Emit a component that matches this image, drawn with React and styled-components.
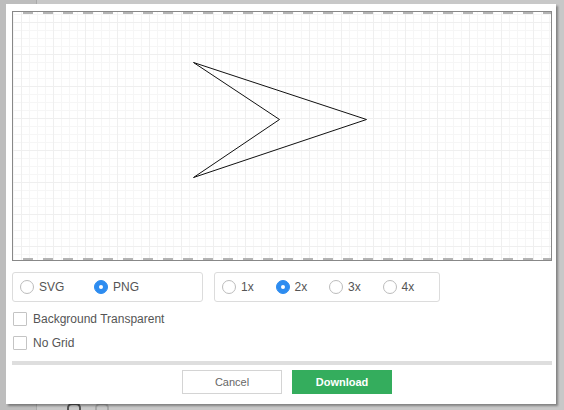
import React, { useState } from "react";
import styled, { createGlobalStyle } from "styled-components";

const GlobalStyle = createGlobalStyle`
  html, body {
    margin: 0;
    padding: 0;
    background: #c8c8c8;
    font-family: "Liberation Sans", Arial, Helvetica, sans-serif;
  }
`;

const Workspace = styled.div`
  position: relative;
  width: 564px;
  height: 410px;
  overflow: hidden;
  display: flex;
  background: #c8c8c8;
`;

const SideBar = styled.div`
  width: 36px;
  flex: none;
  background: #bdbdbd;
  border-right: 1px solid #a9a9a9;
`;

const ToolStrip = styled.div`
  flex: 1;
  display: flex;
  align-items: flex-end;
  padding-left: 30px;
  gap: 14px;
`;

const ToolGlyph = styled.span`
  width: 10px;
  height: 5px;
  border-radius: 5px 5px 0 0;
  border: 2px solid ${(p) => (p.$dim ? "#a8a8a8" : "#555")};
  border-bottom: none;
`;

/* modal window over the editor */
const Dialog = styled.div`
  position: absolute;
  left: 6px;
  top: 4px;
  width: 550px;
  height: 400px;
  box-sizing: border-box;
  background: #fff;
  padding: 7px 4px 0 6px;
  box-shadow: 2px 2px 2px rgba(0, 0, 0, 0.35);
  display: flex;
  flex-direction: column;
`;

const Preview = styled.div`
  position: relative;
  width: 540px;
  height: 250px;
  box-sizing: border-box;
  border: 1px solid #888;
  background-color: #fff;
  background-image:
    linear-gradient(to right, #efefef 1px, transparent 1px),
    linear-gradient(to bottom, #efefef 1px, transparent 1px),
    linear-gradient(to right, #f6f6f6 1px, transparent 1px),
    linear-gradient(to bottom, #f6f6f6 1px, transparent 1px);
  background-size: 32px 32px, 32px 32px, 8px 8px, 8px 8px;
  background-position: 8px 10px, 8px 10px, 8px 10px, 8px 10px;
`;

/* page break markers along the top and bottom edge */
const PageEdge = styled.div`
  position: absolute;
  left: 0;
  right: 0;
  height: 2px;
  ${(p) => (p.$bottom ? "bottom: 0;" : "top: 0;")}
  background: repeating-linear-gradient(
    to right,
    transparent 0 10px,
    #b4b4b4 10px 20px
  );
`;

const Drawing = styled.svg`
  position: absolute;
  left: 0;
  top: 0;
`;

const OptionRow = styled.div`
  display: flex;
  gap: 11px;
  margin-top: 11px;
`;

const OptionGroup = styled.div`
  height: 30px;
  width: ${(p) => p.$width}px;
  box-sizing: border-box;
  border: 1px solid #dcdcdc;
  border-radius: 3px;
  display: flex;
  align-items: center;
  padding-left: 7px;
`;

const RadioLabel = styled.label`
  width: ${(p) => p.$width}px;
  flex: none;
  display: flex;
  align-items: center;
  gap: 5px;
  font-size: 12px;
  color: #555;
  cursor: pointer;
`;

const RadioDot = styled.span`
  width: 14px;
  height: 14px;
  box-sizing: border-box;
  border-radius: 50%;
  flex: none;
  border: 1px solid ${(p) => (p.$on ? "#2d8cf0" : "#bcbcbc")};
  background: ${(p) => (p.$on ? "#2d8cf0" : "#fff")};
  display: flex;
  align-items: center;
  justify-content: center;

  &::after {
    content: "";
    width: 4px;
    height: 4px;
    border-radius: 50%;
    background: #fff;
    display: ${(p) => (p.$on ? "block" : "none")};
  }
`;

const CheckList = styled.div`
  display: flex;
  flex-direction: column;
  gap: 10px;
  margin-top: 10px;
  padding-left: 1px;
`;

const CheckLabel = styled.label`
  display: flex;
  align-items: center;
  gap: 6px;
  font-size: 12px;
  color: #555;
  height: 14px;
  cursor: pointer;
`;

const CheckBox = styled.span`
  width: 14px;
  height: 14px;
  box-sizing: border-box;
  border: 1px solid #c4c4c4;
  border-radius: 1px;
  background: #fff;
`;

const Divider = styled.div`
  width: 540px;
  height: 4px;
  background: #dedede;
  margin-top: 11px;
`;

const Footer = styled.div`
  width: 540px;
  display: flex;
  justify-content: center;
  gap: 10px;
  margin-top: 5px;
  padding-left: 10px;
  box-sizing: border-box;
`;

const Button = styled.button`
  width: 100px;
  height: 24px;
  box-sizing: border-box;
  font-family: inherit;
  font-size: 11px;
  cursor: pointer;
  border: 1px solid ${(p) => (p.$primary ? "#34ad5d" : "#d4d4d4")};
  background: ${(p) => (p.$primary ? "#34ad5d" : "#fff")};
  color: ${(p) => (p.$primary ? "#fff" : "#666")};
  font-weight: ${(p) => (p.$primary ? "bold" : "normal")};
`;

function Radio({ label, checked, width, onSelect }) {
  return (
    <RadioLabel $width={width} onClick={onSelect}>
      <RadioDot $on={checked} />
      {label}
    </RadioLabel>
  );
}

export default function App() {
  const [format, setFormat] = useState("PNG");
  const [scale, setScale] = useState("2x");

  return (
    <>
      <GlobalStyle />
      <Workspace>
        <SideBar />
        <ToolStrip>
          <ToolGlyph />
          <ToolGlyph $dim />
        </ToolStrip>

        <Dialog>
          <Preview>
            <PageEdge />
            <PageEdge $bottom />
            {/* arrowhead shape: back corners, point, inner notch */}
            <Drawing width="538" height="248">
              <polygon
                points="180.5,50.5 353.5,107.5 180.5,165.5 266.5,107.5"
                fill="none"
                stroke="#111"
                strokeWidth="1"
                strokeLinejoin="miter"
              />
            </Drawing>
          </Preview>

          <OptionRow>
            <OptionGroup $width={191}>
              {["SVG", "PNG"].map((f) => (
                <Radio
                  key={f}
                  label={f}
                  width={74}
                  checked={format === f}
                  onSelect={() => setFormat(f)}
                />
              ))}
            </OptionGroup>
            <OptionGroup $width={226}>
              {["1x", "2x", "3x", "4x"].map((s) => (
                <Radio
                  key={s}
                  label={s}
                  width={53.5}
                  checked={scale === s}
                  onSelect={() => setScale(s)}
                />
              ))}
            </OptionGroup>
          </OptionRow>

          <CheckList>
            <CheckLabel>
              <CheckBox />
              Background Transparent
            </CheckLabel>
            <CheckLabel>
              <CheckBox />
              No Grid
            </CheckLabel>
          </CheckList>

          <Divider />

          <Footer>
            <Button>Cancel</Button>
            <Button $primary>Download</Button>
          </Footer>
        </Dialog>
      </Workspace>
    </>
  );
}
